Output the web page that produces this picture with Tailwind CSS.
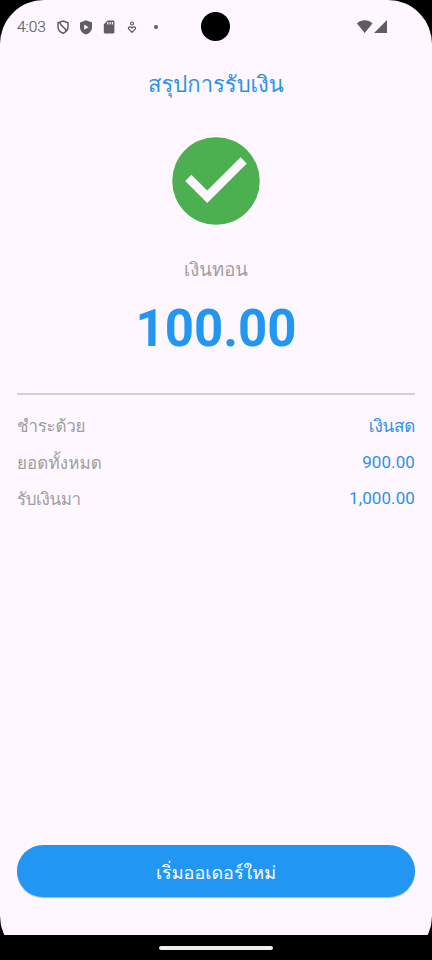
<!DOCTYPE html>
<html lang="th">
<head>
<meta charset="utf-8">
<meta name="viewport" content="width=device-width, initial-scale=1">
<title>สรุปการรับเงิน</title>
<script src="https://cdn.jsdelivr.net/npm/@tailwindcss/browser@4"></script>
</head>
<body class="relative h-[960px] w-[432px] overflow-hidden bg-black font-[Roboto,Loma,sans-serif]">
<div class="flex h-[960px] flex-col overflow-hidden rounded-[44px] bg-[#fef7ff] pb-[25px]">
  <header class="relative flex h-[54px] shrink-0 items-center pl-[17px] text-[#5f5d62]">
    <span class="w-[39px] pt-[1px] text-[15.500px] font-light leading-none tracking-[-0.100px] [-webkit-text-stroke:0.200px]">4:03</span>
    <svg class="h-[14px] w-[14px]" viewBox="0 0 14 14" fill="none" stroke="currentColor" stroke-width="1.500"><path d="M7 1 12 2.800v4C12 10 9.800 12.300 7 13.200 4.200 12.300 2 10 2 6.800v-4zM4 2.300C4 7.500 9.800 6.200 10 11.300"/></svg>
    <svg class="ml-[9px] h-[15px] w-[14px]" viewBox="0 0 14 15" fill="currentColor" fill-rule="evenodd"><path d="M7 .300 13 2.500v4.700c0 3.500-2.500 6.200-6 7.300-3.500-1.100-6-3.800-6-7.300V2.500zM5.200 4.600v5.200l4.400-2.600z"/></svg>
    <svg class="ml-[10px] h-[14px] w-[12px]" viewBox="0 0 12 14" fill="currentColor" fill-rule="evenodd"><path d="M4.500.500h5.700c.7 0 1.200.5 1.200 1.200v10.600c0 .7-.5 1.200-1.200 1.200H2c-.7 0-1.200-.5-1.200-1.200v-8zM4.200 2v2.500h1.200V2zM6.500 2v2.500h1.200V2zM8.800 2v2.500H10V2z"/></svg>
    <svg class="ml-[12px] h-[13px] w-[10px]" viewBox="0 0 10 13" fill="none" stroke="currentColor" stroke-width="1.200"><circle cx="5" cy="2.500" r="1.500"/><path d="M5 11.300 1.800 8.200C.5 6.700 2.800 4.600 5 7 7.200 4.600 9.500 6.700 8.200 8.200z"/></svg>
    <span class="ml-[17px] h-1 w-1 rounded-full bg-current"></span>
    <span class="absolute left-[201px] top-[12px] h-[29px] w-[29px] rounded-full bg-black"></span>
    <svg class="ml-auto mr-[44px] h-[14px] w-[32px]" viewBox="0 0 32 14" fill="currentColor"><path d="M1 3.500C5-.7 12.500-.7 16.500 3.500L8.700 13zM31 0v13H18z"/></svg>
  </header>

  <main class="flex flex-1 flex-col px-[17px]">
    <h1 class="mt-[13px] h-[35px] text-center text-[22px] leading-[36px] text-[#2b93e3]">สรุปการรับเงิน</h1>
    <svg class="mx-auto mt-[35px] h-[88px] w-[88px]" viewBox="2 2 20 20"><circle cx="12" cy="12" r="9.950" fill="#4caf50"/><path fill="#fef7ff" d="M10 17l-5-5 1.410-1.410L10 14.170l7.590-7.590L19 8z"/></svg>
    <p class="mt-[31px] h-[28px] text-center text-[18.500px] leading-[28px] text-[#9e9e9e]">เงินทอน</p>
    <p class="mt-[16px] h-[58px] text-center text-[51px] font-bold leading-[58px] text-[#2196f3]">100.00</p>
    <div class="mt-[35px] h-[1.500px] bg-[#d5cfd8]"></div>
    <dl class="mt-[13px] text-[17px] leading-[36.500px] text-[#2b93e3]">
      <div class="flex h-[36.500px] justify-between"><dt class="tracking-[-0.300px] text-[#9e9e9e]">ชำระด้วย</dt><dd class="tracking-[-0.200px]">เงินสด</dd></div>
      <div class="flex h-[36.500px] justify-between"><dt class="pt-[0.500px] tracking-[0.100px] text-[#9e9e9e]">ยอดทั้งหมด</dt><dd class="-mt-[0.500px] tracking-[0.100px]">900.00</dd></div>
      <div class="flex h-[36.500px] justify-between"><dt class="tracking-[-0.400px] text-[#9e9e9e]">รับเงินมา</dt><dd class="-mt-[0.500px] tracking-[0.100px]">1,000.00</dd></div>
    </dl>
    <button class="mb-[38px] mt-auto h-[52.500px] rounded-full bg-[#2196f3] pt-[3px] text-[18px] text-white shadow-[0_1px_1px_#00000044]">เริ่มออเดอร์ใหม่</button>
  </main>
</div>
<footer class="absolute inset-x-0 bottom-0 flex h-[25px] items-center justify-center bg-black"><span class="h-[4px] w-[114px] rounded-full bg-[#eee]"></span></footer>
</body>
</html>
